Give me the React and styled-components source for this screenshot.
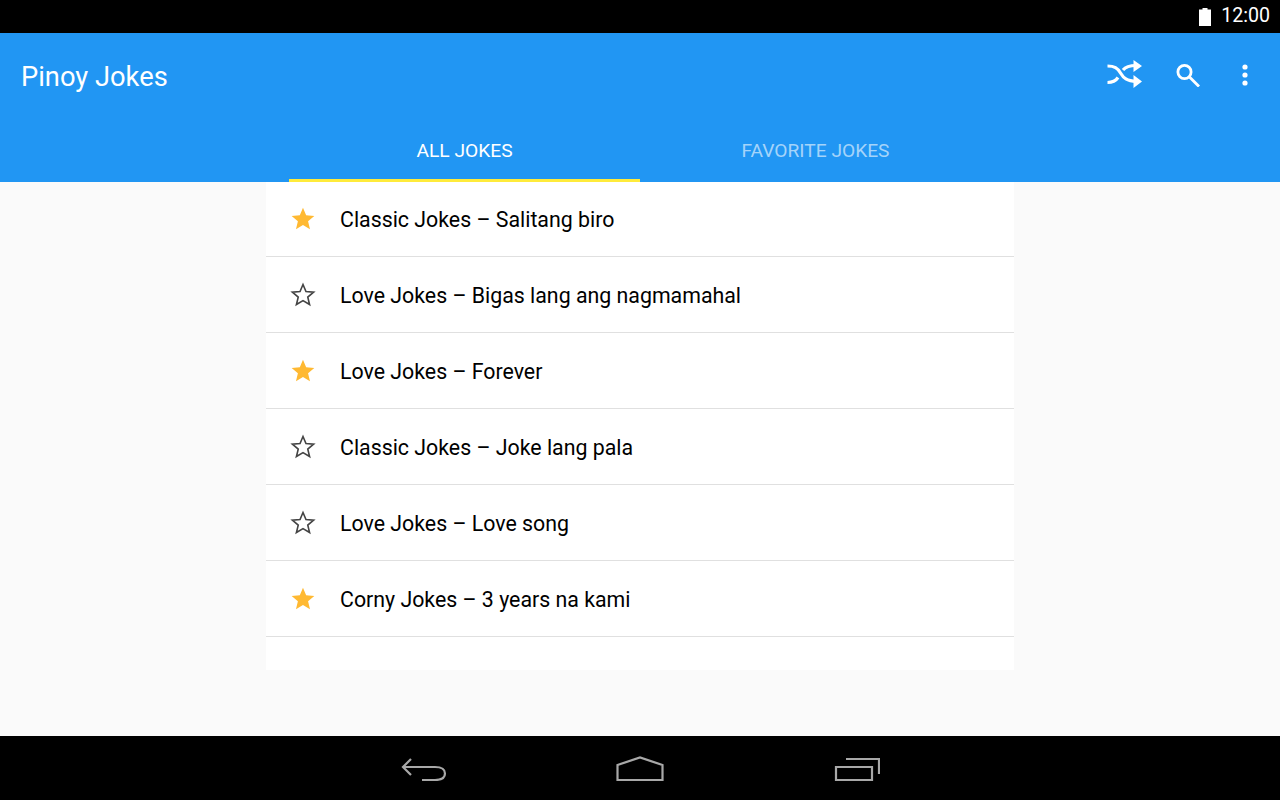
import React from 'react';
import styled, { createGlobalStyle } from 'styled-components';

const Global = createGlobalStyle`
  html, body { margin: 0; padding: 0; background: #000; }
  * { box-sizing: border-box; }
`;
const Screen = styled.div`
  width: 1280px; height: 800px; display: flex; flex-direction: column;
  font-family: Roboto, "Liberation Sans", sans-serif; background: #fafafa; overflow: hidden;
`;
const StatusBar = styled.div`
  height: 33px; background: #000; display: flex; align-items: center; justify-content: flex-end;
  gap: 10px; padding-right: 10px; color: #fff; font-size: 19.6px;
`;
const Clock = styled.span`
  position: relative; top: -1px;
`;
const AppBar = styled.header`
  height: 149px; background: #2196f3; display: flex; flex-direction: column;
`;
const TopRow = styled.div`
  height: 85px; display: flex; align-items: center; justify-content: space-between; padding: 0 10px 0 21px;
`;
const Title = styled.h1`
  margin: 2px 0 0; font-size: 27.3px; font-weight: 400; color: #fff;
`;
const Actions = styled.div`display: flex; align-items: center; margin-bottom: 3px;`;
const ActionButton = styled.div`
  width: ${p => p.$w}px; height: 64px; display: flex; align-items: center; justify-content: center;
`;
const Tabs = styled.nav`
  height: 64px; display: flex; justify-content: center;
`;
const Tab = styled.div`
  width: 351px; display: flex; align-items: center; justify-content: center;
  font-size: 19.2px; color: ${p => p.$active ? '#fff' : 'rgba(255,255,255,0.6)'};
  border-bottom: 3px solid ${p => p.$active ? '#ffeb3b' : 'transparent'};
  padding-top: 3px;
`;
const Content = styled.main`
  flex: 1; display: flex; justify-content: center; align-items: flex-start;
`;
const List = styled.ul`
  width: 748px; height: 488px; margin: 0; padding: 0; list-style: none; background: #fff;
`;
const Row = styled.li`
  height: 76px; display: flex; align-items: center; border-bottom: 1px solid #e0e0e0;
  padding: 1px 0 0 24px; gap: 24px; font-size: 21.33px; color: #000;
  &:first-child { height: 75px; padding-top: 0; }
`;
const NavBar = styled.footer`
  height: 64px; background: #000; display: flex; align-items: center; justify-content: center;
`;
const NavButton = styled.div`
  width: 216.5px; display: flex; justify-content: center; align-items: center;
`;

const STAR = 'M13 1.200l3.300 7.800 8.500.7-6.500 5.500 2 8.300L13 19.100l-7.300 4.400 2-8.300-6.500-5.500 8.500-.7z';
const Star = ({ filled }) => (
  <svg width="26" height="26" viewBox="0 0 26 26">
    {filled
      ? <path d={STAR} fill="#ffb932" transform="translate(.5 .6) scale(.96)" />
      : <path d={STAR} fill="none" stroke="#444" strokeWidth="1.800" transform="translate(1.300 1.400) scale(.9)" />}
  </svg>
);

const rows = [
  ['Classic Jokes – Salitang biro', true],
  ['Love Jokes – Bigas lang ang nagmamahal', false],
  ['Love Jokes – Forever', true],
  ['Classic Jokes – Joke lang pala', false],
  ['Love Jokes – Love song', false],
  ['Corny Jokes – 3 years na kami', true],
];

export default function App() {
  return (
    <Screen>
      <Global />
      <StatusBar>
        <svg width="12" height="18" viewBox="0 0 12 18"><path d="M3.500 0h5v1.500H12V18H0V1.500h3.500z" fill="#fff" /></svg>
        <Clock>12:00</Clock>
      </StatusBar>
      <AppBar>
        <TopRow>
          <Title>Pinoy Jokes</Title>
          <Actions>
            <ActionButton $w={64}>
              <svg width="36" height="28" viewBox="0 0 36 28" fill="none">
                <path d="M1.500 6c7 0 10 2 13 7 3 5 6 8 16 8.500M1.500 22.500c6 0 8.500-2 10.500-5M17 10c2.500-3 6-4.500 13-4.500" stroke="#fff" strokeWidth="3.200" />
                <path d="M27.500 0L36 6 27.500 12zM27.500 15L36 21.500 27.500 28z" fill="#fff" />
              </svg>
            </ActionButton>
            <ActionButton $w={64}>
              <svg width="26" height="26" viewBox="0 0 26 26" fill="none" stroke="#fff" strokeWidth="2.800">
                <circle cx="9.500" cy="11" r="6.600" />
                <path d="M14.500 16l9.500 9.500" />
              </svg>
            </ActionButton>
            <ActionButton $w={50}>
              <svg width="8" height="24" viewBox="0 0 8 24" fill="#fff">
                <circle cx="4" cy="5" r="2.600" /><circle cx="4" cy="13" r="2.600" /><circle cx="4" cy="21" r="2.600" />
              </svg>
            </ActionButton>
          </Actions>
        </TopRow>
        <Tabs>
          <Tab $active>ALL JOKES</Tab>
          <Tab>FAVORITE JOKES</Tab>
        </Tabs>
      </AppBar>
      <Content>
        <List>
          {rows.map(([text, filled]) => (
            <Row key={text}><Star filled={filled} /><span>{text}</span></Row>
          ))}
        </List>
      </Content>
      <NavBar>
        <NavButton>
          <svg width="46" height="26" viewBox="0 0 46 26" fill="none" stroke="#a8a8a8" strokeWidth="2.200">
            <path d="M10 4l-8 8 8 8M2 12h32c6 0 10 2 10 6.500S40 25 34 25H21" />
          </svg>
        </NavButton>
        <NavButton>
          <svg width="48" height="26" viewBox="0 0 48 26" fill="none" stroke="#a8a8a8" strokeWidth="2.200">
            <path d="M1.500 25V10L24 2.500 46.500 10v15z" />
          </svg>
        </NavButton>
        <NavButton>
          <svg width="46" height="26" viewBox="0 0 46 26" fill="none" stroke="#a8a8a8" strokeWidth="2.200">
            <path d="M2 12h36v13H2zM12 4h33v15" />
          </svg>
        </NavButton>
      </NavBar>
    </Screen>
  );
}
